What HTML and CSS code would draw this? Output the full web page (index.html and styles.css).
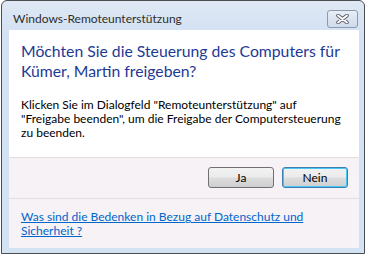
FILE: index.html
```html
<!DOCTYPE html>
<html lang="de">
<head>
<meta charset="utf-8">
<link rel="stylesheet" href="styles.css">
</head>
<body>
<div class="window">
  <div class="titlebar">
    <span class="title">Windows-Remoteunterstützung</span>
    <button class="close" aria-label="Schließen">
      <svg width="13" height="10" viewBox="0 0 13 10">
        <path d="M2 1.5 L11 8.5 M11 1.5 L2 8.5" stroke="#5a5f6a" stroke-width="3.6" stroke-linecap="round" fill="none"/>
        <path d="M2 1.5 L11 8.5 M11 1.5 L2 8.5" stroke="#ffffff" stroke-width="1.8" stroke-linecap="round" fill="none"/>
      </svg>
    </button>
  </div>
  <div class="client">
    <div class="main">
      <h1 class="instruction">Möchten Sie die Steuerung des Computers für<br>Kümer, Martin freigeben?</h1>
      <p class="content">Klicken Sie im Dialogfeld "Remoteunterstützung" auf<br>"Freigabe beenden", um die Freigabe der Computersteuerung<br>zu beenden.</p>
    </div>
    <div class="commands">
      <button class="btn">Ja</button>
      <button class="btn default">Nein</button>
    </div>
    <div class="footer">
      <a class="link" href="#">Was sind die Bedenken in Bezug auf Datenschutz und<br>Sicherheit ?</a>
    </div>
  </div>
</div>
</body>
</html>
```

FILE: styles.css
```css
html, body {
  margin: 0;
  padding: 0;
  background: #ffffff;
}

body {
  font-family: "Lato", "Noto Sans", sans-serif;
  width: 366px;
  height: 256px;
  overflow: hidden;
}

.window {
  margin-left: 1px;
  width: 364px;
  height: 254px;
  box-sizing: border-box;
  border: 1px solid #4a4d52;
  border-radius: 6px 6px 0 0;
  background: linear-gradient(to bottom, #dfe8f4 0px, #d4e2f3 30px, #d3e3f4 100%);
  display: flex;
  flex-direction: column;
}

.titlebar {
  height: 29px;
  box-sizing: border-box;
  padding: 0 6px 0 11px;
  display: flex;
  align-items: flex-start;
  justify-content: space-between;
}

.title {
  font-size: 12px;
  line-height: 16px;
  color: #2e2e2e;
  padding-top: 10px;
  white-space: nowrap;
}

.close {
  margin-top: 9px;
  width: 31px;
  height: 18px;
  padding: 0;
  border: 1px solid #8d99ad;
  border-radius: 3px;
  background: linear-gradient(to bottom, #e9eef6 0%, #dae3ef 50%, #cfdbeb 100%);
  display: flex;
  align-items: center;
  justify-content: center;
}

.close svg {
  display: block;
}

.client {
  margin: 0 5px 5px 7px;
  flex: 1;
  display: flex;
  flex-direction: column;
}

.main {
  height: 127px;
  box-sizing: border-box;
  background: #ffffff;
  padding: 11px 10px 0 12px;
  white-space: nowrap;
}

.instruction {
  margin: 0;
  font-weight: normal;
  font-size: 15.75px;
  line-height: 20px;
  color: #1d3a94;
}

.content {
  margin: 17px 0 0 0;
  font-size: 12px;
  line-height: 14px;
  color: #000000;
}

.commands {
  height: 41px;
  box-sizing: border-box;
  border-top: 1px solid #dfdfdf;
  background: #f6f2f6;
  display: flex;
  justify-content: flex-end;
  align-items: flex-start;
  gap: 8px;
  padding: 9px 11px 0 0;
}

.btn {
  width: 66px;
  height: 21px;
  box-sizing: border-box;
  padding: 0;
  border: 1px solid #707070;
  border-radius: 3px;
  background: linear-gradient(to bottom, #f2f2f2 0%, #ebebeb 48%, #dddddd 52%, #cfcfcf 100%);
  font-family: inherit;
  font-size: 12px;
  line-height: 17px;
  color: #000000;
}

.btn.default {
  border-color: #3c7fb1;
  box-shadow: inset 0 0 0 1px #48c6f4;
}

.footer {
  flex: 1;
  border-top: 1px solid #dfdfdf;
  background: #f6f2f6;
  padding: 11px 10px 0 12px;
  font-size: 12px;
  line-height: 14px;
  white-space: nowrap;
}

.link {
  color: #0066cc;
  text-decoration: underline;
}
```
